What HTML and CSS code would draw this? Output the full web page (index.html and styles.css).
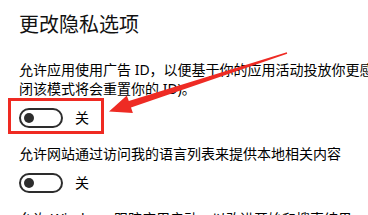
FILE: index.html
```html
<!DOCTYPE html>
<html lang="zh-CN">
<head>
<meta charset="utf-8">
<link rel="stylesheet" href="styles.css">
</head>
<body>
<main class="page">
  <h1 class="title">更改隐私选项</h1>
  <section class="setting">
    <p class="desc"><span class="line">允许应用使用广告 ID，以便基于你的应用活动投放你更感兴趣的广告(关</span><span class="line">闭该模式将会重置你的 ID)。</span></p>
    <div class="switch-row">
      <span class="toggle"><span class="knob"></span></span>
      <span class="state">关</span>
    </div>
  </section>
  <section class="setting">
    <p class="desc"><span class="line">允许网站通过访问我的语言列表来提供本地相关内容</span></p>
    <div class="switch-row">
      <span class="toggle"><span class="knob"></span></span>
      <span class="state">关</span>
    </div>
  </section>
  <section class="setting">
    <p class="desc"><span class="line">允许 Windows 跟踪应用启动，以改进开始和搜索结果</span></p>
  </section>
</main>
<div class="highlight"></div>
<svg class="arrow" width="368" height="215" viewBox="0 0 368 215" xmlns="http://www.w3.org/2000/svg">
  <polygon fill="#ee2b24" points="109,111.5 126.8,95.4 128.8,100.9 286.8,52.3 287.2,53.7 131,107.5 132.9,113"/>
</svg>
</body>
</html>
```

FILE: styles.css
```css
html, body {
  margin: 0;
  padding: 0;
  background: #ffffff;
  overflow: hidden;
}

body {
  width: 368px;
  height: 215px;
  position: relative;
  font-family: "Noto Sans", "Noto Sans CJK SC", sans-serif;
  color: #000000;
}

.page {
  padding: 11px 0 0 19px;
  display: flex;
  flex-direction: column;
}

.title {
  margin: 0 0 21px 0;
  font-size: 20px;
  line-height: 28px;
  font-weight: 400;
  white-space: nowrap;
  color: #111111;
}

.setting {
  display: flex;
  flex-direction: column;
}

.desc {
  margin: 0 0 10px 0;
  font-size: 14px;
  line-height: 19px;
  display: flex;
  flex-direction: column;
}

.line {
  white-space: nowrap;
}

.switch-row {
  display: flex;
  align-items: center;
  height: 20px;
  margin-bottom: 16px;
  gap: 12px;
}

.toggle {
  box-sizing: border-box;
  width: 44px;
  height: 20px;
  border: 2px solid #2d2d2d;
  border-radius: 10px;
  display: flex;
  align-items: center;
  padding-left: 3px;
}

.knob {
  width: 10px;
  height: 10px;
  border-radius: 50%;
  background: #2d2d2d;
}

.state {
  font-size: 14px;
  line-height: 20px;
}

.highlight {
  position: absolute;
  left: 8px;
  top: 98px;
  width: 96px;
  height: 36px;
  box-sizing: border-box;
  border: 3px solid #ef2a22;
}

.arrow {
  position: absolute;
  left: 0;
  top: 0;
}
```
